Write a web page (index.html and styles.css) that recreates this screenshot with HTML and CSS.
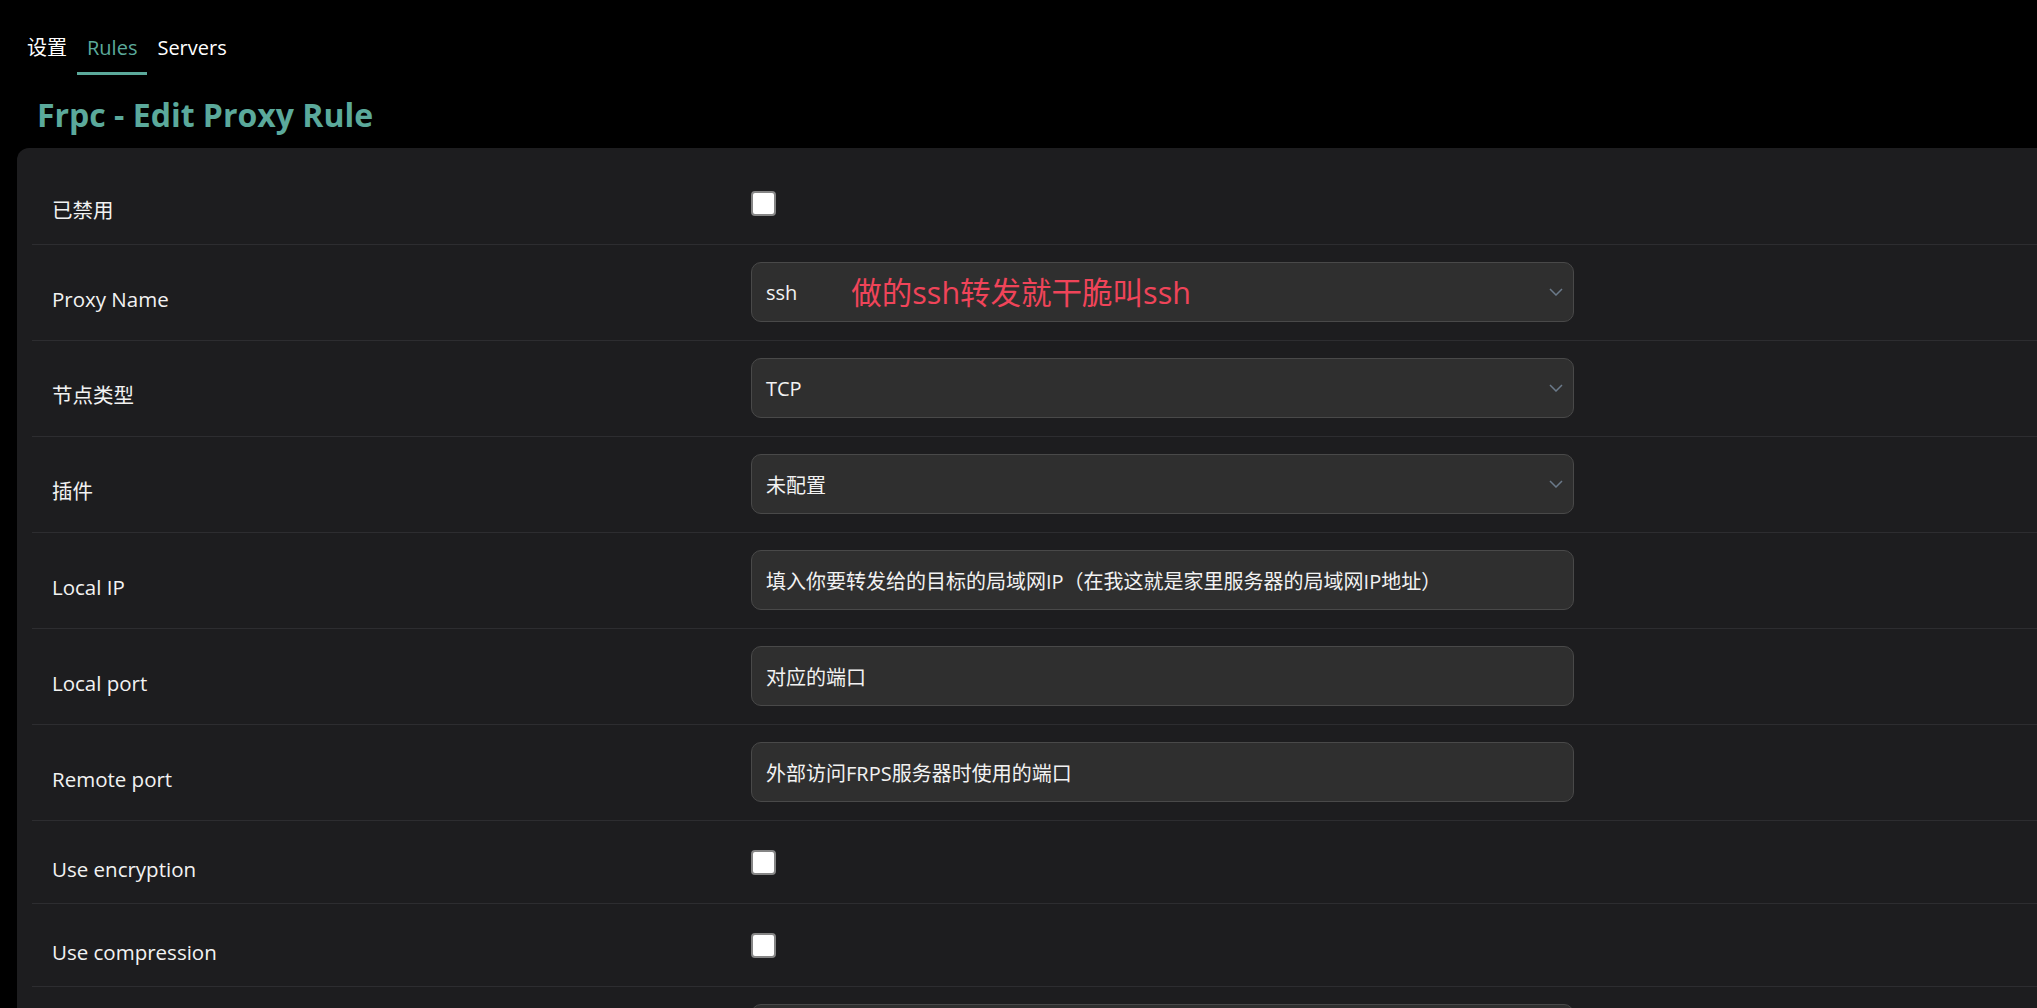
FILE: index.html
```html
<!DOCTYPE html>
<html lang="zh-CN">
<head>
    <meta charset="UTF-8">
    <meta name="viewport" content="width=device-width, initial-scale=1.0">
    <title>Frpc - Edit Proxy Rule</title>
    <link rel="stylesheet" href="styles.css">
</head>
<body>
    <ul class="tabs">
        <li class="tab">设置</li>
        <li class="tab active">Rules</li>
        <li class="tab">Servers</li>
    </ul>

    <h2 class="page-title">Frpc - Edit Proxy Rule</h2>

    <div class="card">
        <div class="row">
            <label class="row-label">已禁用</label>
            <div><input type="checkbox" class="check"></div>
        </div>
        <div class="row field">
            <label class="row-label">Proxy Name</label>
            <div class="select">
                <span class="value">ssh</span>
                <span class="note">做的ssh转发就干脆叫ssh</span>
                <svg class="chevron" width="14" height="8" viewBox="0 0 14 8"><path d="M1 1l6 6 6-6" fill="none" stroke="#6b7a8a" stroke-width="1.5"/></svg>
            </div>
        </div>
        <div class="row field">
            <label class="row-label">节点类型</label>
            <div class="select">
                <span class="value">TCP</span>
                <svg class="chevron" width="14" height="8" viewBox="0 0 14 8"><path d="M1 1l6 6 6-6" fill="none" stroke="#6b7a8a" stroke-width="1.5"/></svg>
            </div>
        </div>
        <div class="row field">
            <label class="row-label">插件</label>
            <div class="select">
                <span class="value">未配置</span>
                <svg class="chevron" width="14" height="8" viewBox="0 0 14 8"><path d="M1 1l6 6 6-6" fill="none" stroke="#6b7a8a" stroke-width="1.5"/></svg>
            </div>
        </div>
        <div class="row field">
            <label class="row-label">Local IP</label>
            <input type="text" class="text-input" value="填入你要转发给的目标的局域网IP（在我这就是家里服务器的局域网IP地址）">
        </div>
        <div class="row field">
            <label class="row-label">Local port</label>
            <input type="text" class="text-input" value="对应的端口">
        </div>
        <div class="row field">
            <label class="row-label">Remote port</label>
            <input type="text" class="text-input" value="外部访问FRPS服务器时使用的端口">
        </div>
        <div class="row">
            <label class="row-label">Use encryption</label>
            <div><input type="checkbox" class="check"></div>
        </div>
        <div class="row">
            <label class="row-label">Use compression</label>
            <div><input type="checkbox" class="check"></div>
        </div>
        <div class="row field">
            <label class="row-label"></label>
            <input type="text" class="text-input" value="">
        </div>
    </div>
</body>
</html>
```

FILE: styles.css
```css
html, body {
    margin: 0;
    background-color: #000;
    overflow: hidden;
}
body {
    font-family: "Open Sans", "Noto Sans CJK SC", sans-serif;
    color: #f2f2f2;
    font-size: 20px;
}
.tabs {
    list-style: none;
    margin: 0;
    padding: 34px 0 0 17px;
    display: flex;
}
.tab {
    padding: 0 10px 10px;
    line-height: 28px;
    border-bottom: 3px solid transparent;
    color: #fff;
}
.tab.active {
    color: #5ba99b;
    border-bottom-color: #5ba99b;
}
.page-title {
    margin: 20px 0 13px 37px;
    font-size: 32px;
    line-height: 40px;
    font-weight: 700;
    color: #5ba99b;
}
.card {
    margin-left: 17px;
    background-color: #1d1d1f;
    border-radius: 12px 0 0 0;
    padding: 14px 0 0 15px;
    height: 846px;
    overflow: hidden;
}
.row {
    display: grid;
    grid-template-columns: 699px 823px;
    align-items: center;
    padding-left: 20px;
    min-height: 83px;
    box-sizing: border-box;
    border-bottom: 1px solid #2d2d30;
}
.row.field {
    padding-top: 17px;
    padding-bottom: 18px;
}
.row-label {
    padding-top: 14px;
    line-height: 28px;
    font-size: 20.5px;
}
.check {
    appearance: none;
    display: block;
    margin: 0;
    width: 25px;
    height: 25px;
    box-sizing: border-box;
    background: #fff;
    border: 2px solid #858585;
    border-radius: 4px;
}
.select, .text-input {
    height: 60px;
    box-sizing: border-box;
    background-color: #2f2f2f;
    border: 1px solid #494949;
    border-radius: 10px;
    color: #f2f2f2;
    font-family: inherit;
    font-size: 20px;
}
.select {
    display: flex;
    align-items: center;
    padding: 0 10px 0 14px;
}
.text-input {
    width: 100%;
    padding: 0 14px;
    outline: none;
}
.note {
    margin-left: 54px;
    font-size: 30.5px;
    color: #f04459;
    line-height: 40px;
}
.chevron {
    margin-left: auto;
}
```
